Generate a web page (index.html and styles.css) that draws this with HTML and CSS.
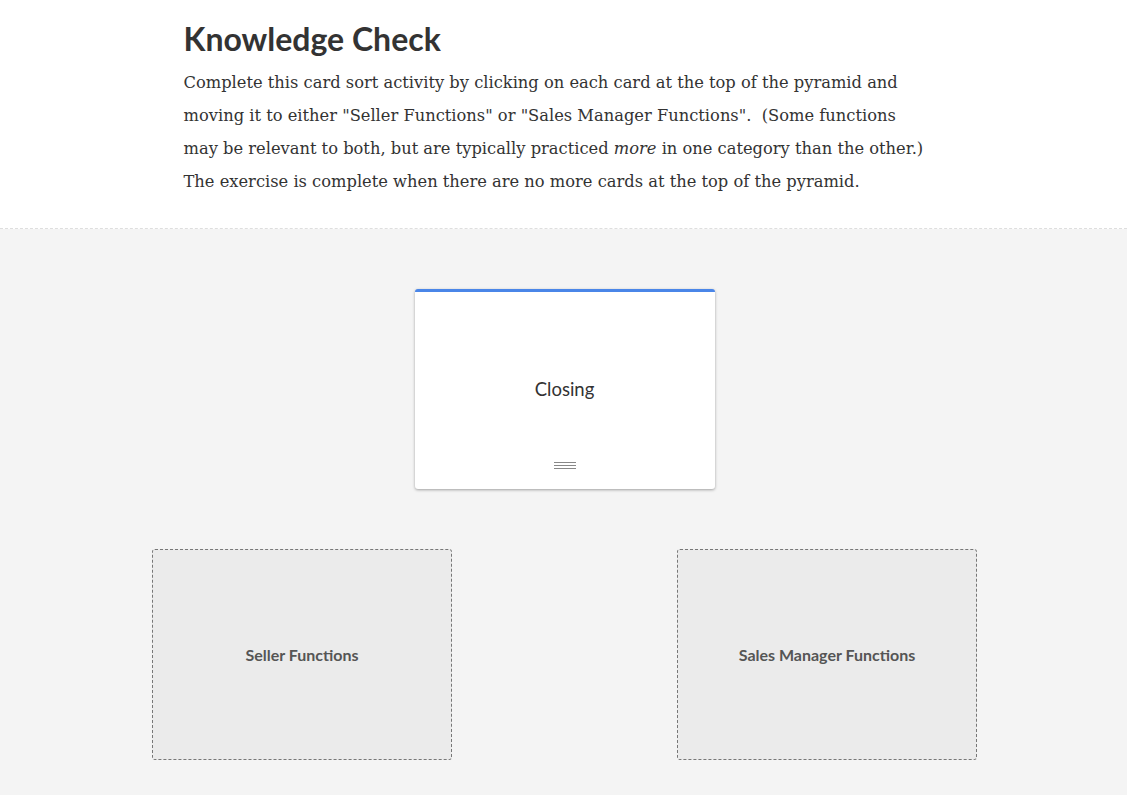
FILE: index.html
```html
<!DOCTYPE html>
<html lang="en">

<head>
    <meta charset="UTF-8">
    <title>Knowledge Check</title>
    <meta name="viewport" content="width=device-width, initial-scale=1.0">
    <link rel="stylesheet" href="styles.css">
</head>

<body>

    <header class="intro">
        <div class="intro-inner">
            <h1>Knowledge Check</h1>
            <p>Complete this card sort activity by clicking on each card at the top of the pyramid and
                moving it to either "Seller Functions" or "Sales Manager Functions".&nbsp; (Some functions
                may be relevant to both, but are typically practiced <em>more</em> in one category than the other.)
                The exercise is complete when there are no more cards at the top of the pyramid.</p>
        </div>
    </header>

    <section class="sorting">
        <div class="deck">
            <div class="card">
                <span class="card-title">Closing</span>
                <span class="handle"></span>
            </div>
        </div>

        <div class="piles">
            <div class="pile">Seller Functions</div>
            <div class="pile">Sales Manager Functions</div>
        </div>
    </section>

</body>

</html>
```

FILE: styles.css
```css
body {
    margin: 0;
    padding: 0;
    background-color: #f4f4f4;
    color: #333;
    font-family: "DejaVu Serif", serif;
}

.intro {
    background-color: #fff;
    border-bottom: 1px dashed #dedede;
    padding: 20px 0 30px;
}

.intro-inner {
    max-width: 760px;
    margin: 0 auto;
}

.intro h1 {
    font-family: Lato, sans-serif;
    font-weight: 700;
    font-size: 32px;
    line-height: 1.2;
    margin: 0 0 8px;
    color: #333;
}

.intro p {
    max-width: 746px;
    font-size: 16.3px;
    line-height: 33px;
    margin: 0;
}

.sorting {
    padding: 60px 0 36px 2px;
}

.deck {
    display: flex;
    justify-content: center;
}

.card {
    width: 300px;
    height: 200px;
    box-sizing: border-box;
    background-color: #fff;
    border-top: 3px solid #4a86e8;
    border-radius: 3px;
    box-shadow: 0 1px 3px rgba(0, 0, 0, 0.35);
    display: flex;
    flex-direction: column;
    align-items: center;
    justify-content: center;
    position: relative;
}

.card-title {
    font-family: Lato, sans-serif;
    font-size: 18.5px;
    color: #333;
    margin-bottom: 3px;
}

.handle {
    position: absolute;
    bottom: 20px;
    left: 139px;
    width: 22px;
    height: 7px;
    border-top: 1px solid #888;
    border-bottom: 1px solid #888;
    box-sizing: border-box;
}

.handle::after {
    content: "";
    display: block;
    margin-top: 2px;
    border-top: 1px solid #888;
}

.piles {
    display: flex;
    justify-content: center;
    gap: 225px;
    margin-top: 60px;
}

.pile {
    width: 300px;
    height: 211px;
    box-sizing: border-box;
    background-color: #ebebeb;
    border: 1px dashed #777;
    border-radius: 3px;
    display: flex;
    align-items: center;
    justify-content: center;
    font-family: Lato, sans-serif;
    font-weight: 700;
    font-size: 16px;
    color: #555;
}
```
